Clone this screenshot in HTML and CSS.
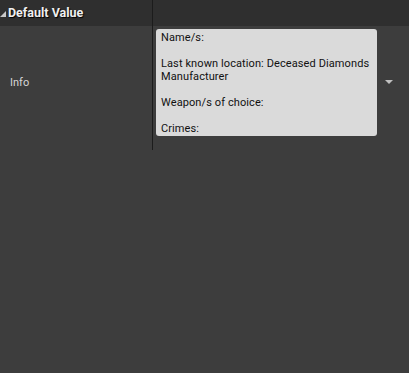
FILE: index.html
```html
<!DOCTYPE html>
<html lang="en">
<head>
    <meta charset="UTF-8">
    <title>Default Value</title>
    <link rel="stylesheet" href="styles.css">
</head>
<body>
    <div class="panel">
        <div class="header">
            <div class="headerName">
                <span class="expander"></span>
                <span class="title">Default Value</span>
            </div>
            <div class="headerValue"></div>
        </div>
        <div class="row">
            <div class="rowName">Info</div>
            <div class="rowValue">
                <div class="textBox">Name/s:<br><br>Last known location: Deceased Diamonds Manufacturer<br><br>Weapon/s of choice:<br><br>Crimes:</div>
                <span class="dropArrow"></span>
            </div>
        </div>
    </div>
</body>
</html>
```

FILE: styles.css
```css
html, body {
    margin: 0;
    height: 100%;
}
body {
    background-color: #3d3d3d;
    font-family: Roboto, "Liberation Sans", sans-serif;
}
.header {
    display: grid;
    grid-template-columns: 153px 1fr;
    height: 26px;
    background-color: #2f2f2f;
}
.headerName {
    display: flex;
    align-items: center;
    border-right: 1px solid #1c1c1c;
    padding-bottom: 2px;
}
.expander {
    width: 0;
    height: 0;
    border-left: 6px solid transparent;
    border-bottom: 6px solid #c8c8c8;
    margin-right: 2px;
    margin-top: 3px;
}
.title {
    color: #f0f0f0;
    font-weight: bold;
    font-size: 12.5px;
    text-shadow: 1px 1px 1px #000;
}
.row {
    display: grid;
    grid-template-columns: 153px 1fr;
    height: 124px;
}
.rowName {
    display: flex;
    align-items: center;
    padding-left: 10px;
    border-right: 1px solid #1c1c1c;
    color: #d6d6d6;
    font-size: 11px;
    padding-bottom: 12px;
}
.rowValue {
    display: flex;
    align-items: flex-start;
    padding: 3px 0 0 3px;
}
.textBox {
    width: 211px;
    height: 103px;
    padding: 2px 5px 2px 5px;
    background-color: #dadada;
    border-radius: 3px;
    color: #111;
    font-size: 11px;
    letter-spacing: 0.1px;
    line-height: 13px;
}
.dropArrow {
    width: 0;
    height: 0;
    margin: 51px 0 0 8px;
    border-left: 4px solid transparent;
    border-right: 4px solid transparent;
    border-top: 4px solid #c0c0c0;
}
```
